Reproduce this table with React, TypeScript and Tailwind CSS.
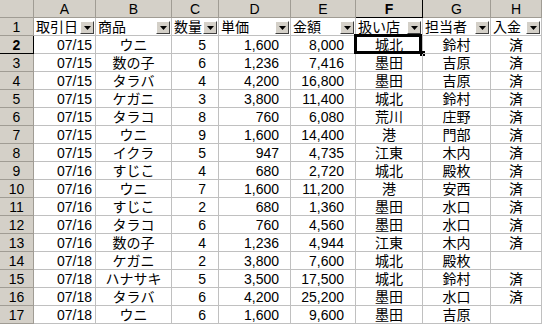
import React from 'react';

const cols = ['A', 'B', 'C', 'D', 'E', 'F', 'G', 'H'];
const heads = ['取引日', '商品', '数量', '単価', '金額', '扱い店', '担当者', '入金'];

const rows: string[][] = [
  ['07/15', 'ウニ', '5', '1,600', '8,000', '城北', '鈴村', '済'],
  ['07/15', '数の子', '6', '1,236', '7,416', '墨田', '吉原', '済'],
  ['07/15', 'タラバ', '4', '4,200', '16,800', '墨田', '吉原', '済'],
  ['07/15', 'ケガニ', '3', '3,800', '11,400', '城北', '鈴村', '済'],
  ['07/15', 'タラコ', '8', '760', '6,080', '荒川', '庄野', '済'],
  ['07/15', 'ウニ', '9', '1,600', '14,400', '港', '門部', '済'],
  ['07/15', 'イクラ', '5', '947', '4,735', '江東', '木内', '済'],
  ['07/16', 'すじこ', '4', '680', '2,720', '城北', '殿枚', '済'],
  ['07/16', 'ウニ', '7', '1,600', '11,200', '港', '安西', '済'],
  ['07/16', 'すじこ', '2', '680', '1,360', '墨田', '水口', '済'],
  ['07/16', 'タラコ', '6', '760', '4,560', '墨田', '水口', '済'],
  ['07/16', '数の子', '4', '1,236', '4,944', '江東', '木内', '済'],
  ['07/18', 'ケガニ', '2', '3,800', '7,600', '城北', '殿枚', ''],
  ['07/18', 'ハナサキ', '5', '3,500', '17,500', '城北', '鈴村', '済'],
  ['07/18', 'タラバ', '6', '4,200', '25,200', '墨田', '水口', '済'],
  ['07/18', 'ウニ', '6', '1,600', '9,600', '墨田', '吉原', ''],
];

// column widths incl. right gridline
const widths = ['w-[62px]', 'w-[76px]', 'w-[47px]', 'w-[72px]', 'w-[65px]', 'w-[67px]', 'w-[68px]', 'w-[51px]'];

// dates sit at the right edge, numbers keep a trailing gap, names centered
const align = [
  'justify-end pr-[3px]',
  'justify-center',
  'justify-end pr-[12px]',
  'justify-end pr-[11px]',
  'justify-end pr-[11px]',
  'justify-center',
  'justify-center',
  'justify-center',
];

const base = 'relative shrink-0 h-[18px] flex items-end pb-[1px] text-[14px] leading-none whitespace-nowrap';
const hdr = base + ' justify-center bg-[#d4d0c8] border-r border-b border-[#a09c94]';
const hdrSel = base + ' justify-center bg-[#d4d0c8] border-r border-b border-black font-bold';
const cell = base + ' border-r border-b border-[#c0c0c0]';

function DropButton() {
  return (
    <div className="absolute right-[1px] bottom-[1px] flex h-[13px] w-[14px] items-center justify-center border border-t-white border-l-white border-r-[#404040] border-b-[#404040] bg-[#d4d0c8]">
      <svg width="7" height="4" viewBox="0 0 7 4">
        <path d="M0 0h7L3.5 4z" fill="#000" />
      </svg>
    </div>
  );
}

export default function App() {
  return (
    <div className="h-[324px] w-[542px] overflow-hidden bg-white font-['Liberation_Sans','Noto_Sans_CJK_JP',sans-serif] text-black">
      {/* column letters */}
      <div className="flex">
        <div className={hdr + ' w-[34px]'} />
        {cols.map((c, j) => (
          <div key={c} className={(c === 'F' ? hdrSel : hdr) + ' ' + widths[j]}>
            {c}
          </div>
        ))}
      </div>

      {/* row 1: autofilter headers */}
      <div className="flex">
        <div className={hdr + ' w-[34px]'}>1</div>
        {heads.map((h, j) => (
          <div key={h} className={cell + ' justify-start pl-[2px] ' + widths[j]}>
            {h}
            <DropButton />
          </div>
        ))}
      </div>

      {rows.map((r, i) => (
        <div key={i} className="flex">
          <div className={(i === 0 ? hdrSel : hdr) + ' w-[34px]'}>{i + 2}</div>
          {r.map((v, j) => (
            <div key={j} className={cell + ' ' + align[j] + ' ' + widths[j]}>
              {v}
              {i === 0 && j === 5 && (
                <>
                  <div className="absolute -left-[2px] -top-[2px] h-[20px] w-[68px] border-[3px] border-black" />
                  <div className="absolute -right-[3px] -bottom-[3px] h-[5px] w-[5px] bg-black" />
                </>
              )}
            </div>
          ))}
        </div>
      ))}
    </div>
  );
}
